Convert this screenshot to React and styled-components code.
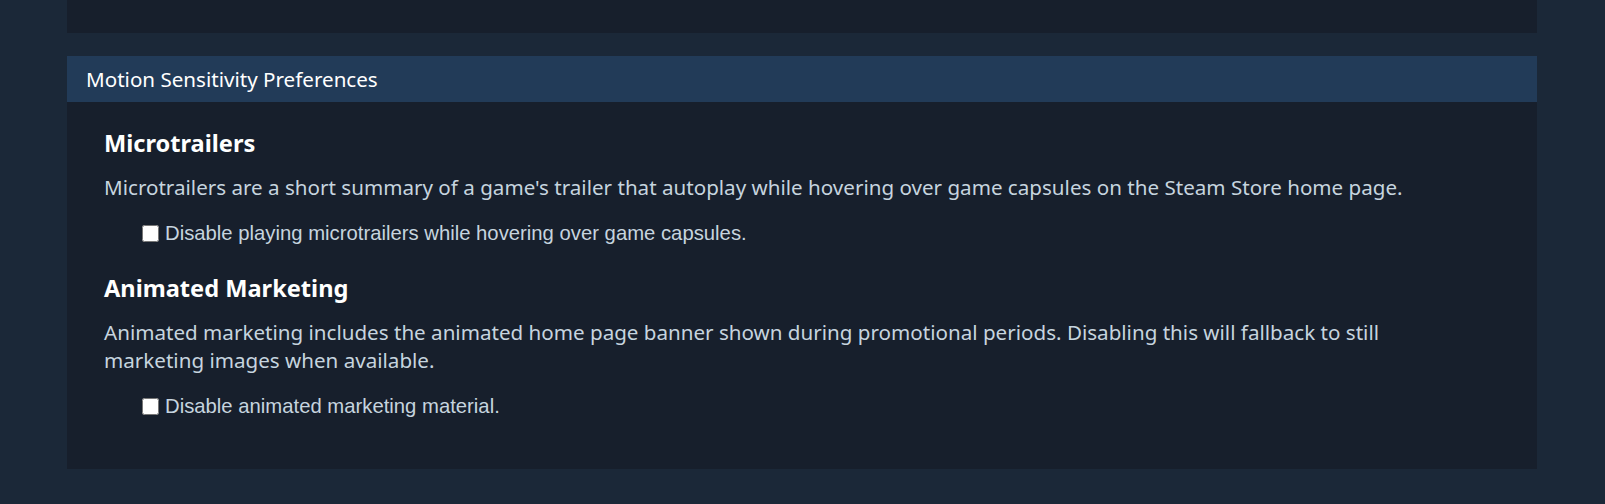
import React from 'react';
import styled, { createGlobalStyle } from 'styled-components';

const GlobalStyle = createGlobalStyle`
  html, body {
    margin: 0;
    padding: 0;
    background-color: #1b2838;
  }
  body {
    font-family: "Noto Sans", Arial, sans-serif;
  }
`;

const Page = styled.div`
  display: flex;
  flex-direction: column;
  gap: 23px;
  padding: 0 68px 34px 67px;
`;

const TopPanel = styled.div`
  height: 33px;
  background-color: #171f2c;
`;

const Section = styled.section`
  background-color: #171f2c;
`;

const SectionHeader = styled.div`
  height: 46px;
  display: flex;
  align-items: center;
  padding-left: 19px;
  background-color: #223b58;
  color: #ffffff;
  font-size: 20.6px;
`;

const SectionBody = styled.div`
  padding: 25px 37px 24px;
`;

const Heading = styled.h2`
  margin: 0 0 14px;
  color: #ffffff;
  font-size: 23.6px;
  font-weight: 700;
  line-height: 32px;
`;

const Description = styled.p`
  margin: 0;
  max-width: 1315px;
  color: #c6d4df;
  font-size: 20.6px;
  line-height: 28px;
`;

const Option = styled.label`
  display: flex;
  align-items: center;
  gap: 6px;
  height: 24px;
  margin: 20px 0 27px 38px;
  color: #c6d4df;
  font-family: "Liberation Sans", Arial, sans-serif;
  font-size: 20.3px;
`;

const Box = styled.input.attrs({ type: 'checkbox' })`
  margin: 0;
  width: 17px;
  height: 17px;
`;

const Group = ({ title, text, option }) => (
  <>
    <Heading>{title}</Heading>
    <Description>{text}</Description>
    <Option>
      <Box />
      {option}
    </Option>
  </>
);

export default function App() {
  return (
    <>
      <GlobalStyle />
      <Page>
        <TopPanel />
        <Section>
          <SectionHeader>Motion Sensitivity Preferences</SectionHeader>
          <SectionBody>
            <Group
              title="Microtrailers"
              text="Microtrailers are a short summary of a game's trailer that autoplay while hovering over game capsules on the Steam Store home page."
              option="Disable playing microtrailers while hovering over game capsules."
            />
            <Group
              title="Animated Marketing"
              text="Animated marketing includes the animated home page banner shown during promotional periods. Disabling this will fallback to still marketing images when available."
              option="Disable animated marketing material."
            />
          </SectionBody>
        </Section>
      </Page>
    </>
  );
}
